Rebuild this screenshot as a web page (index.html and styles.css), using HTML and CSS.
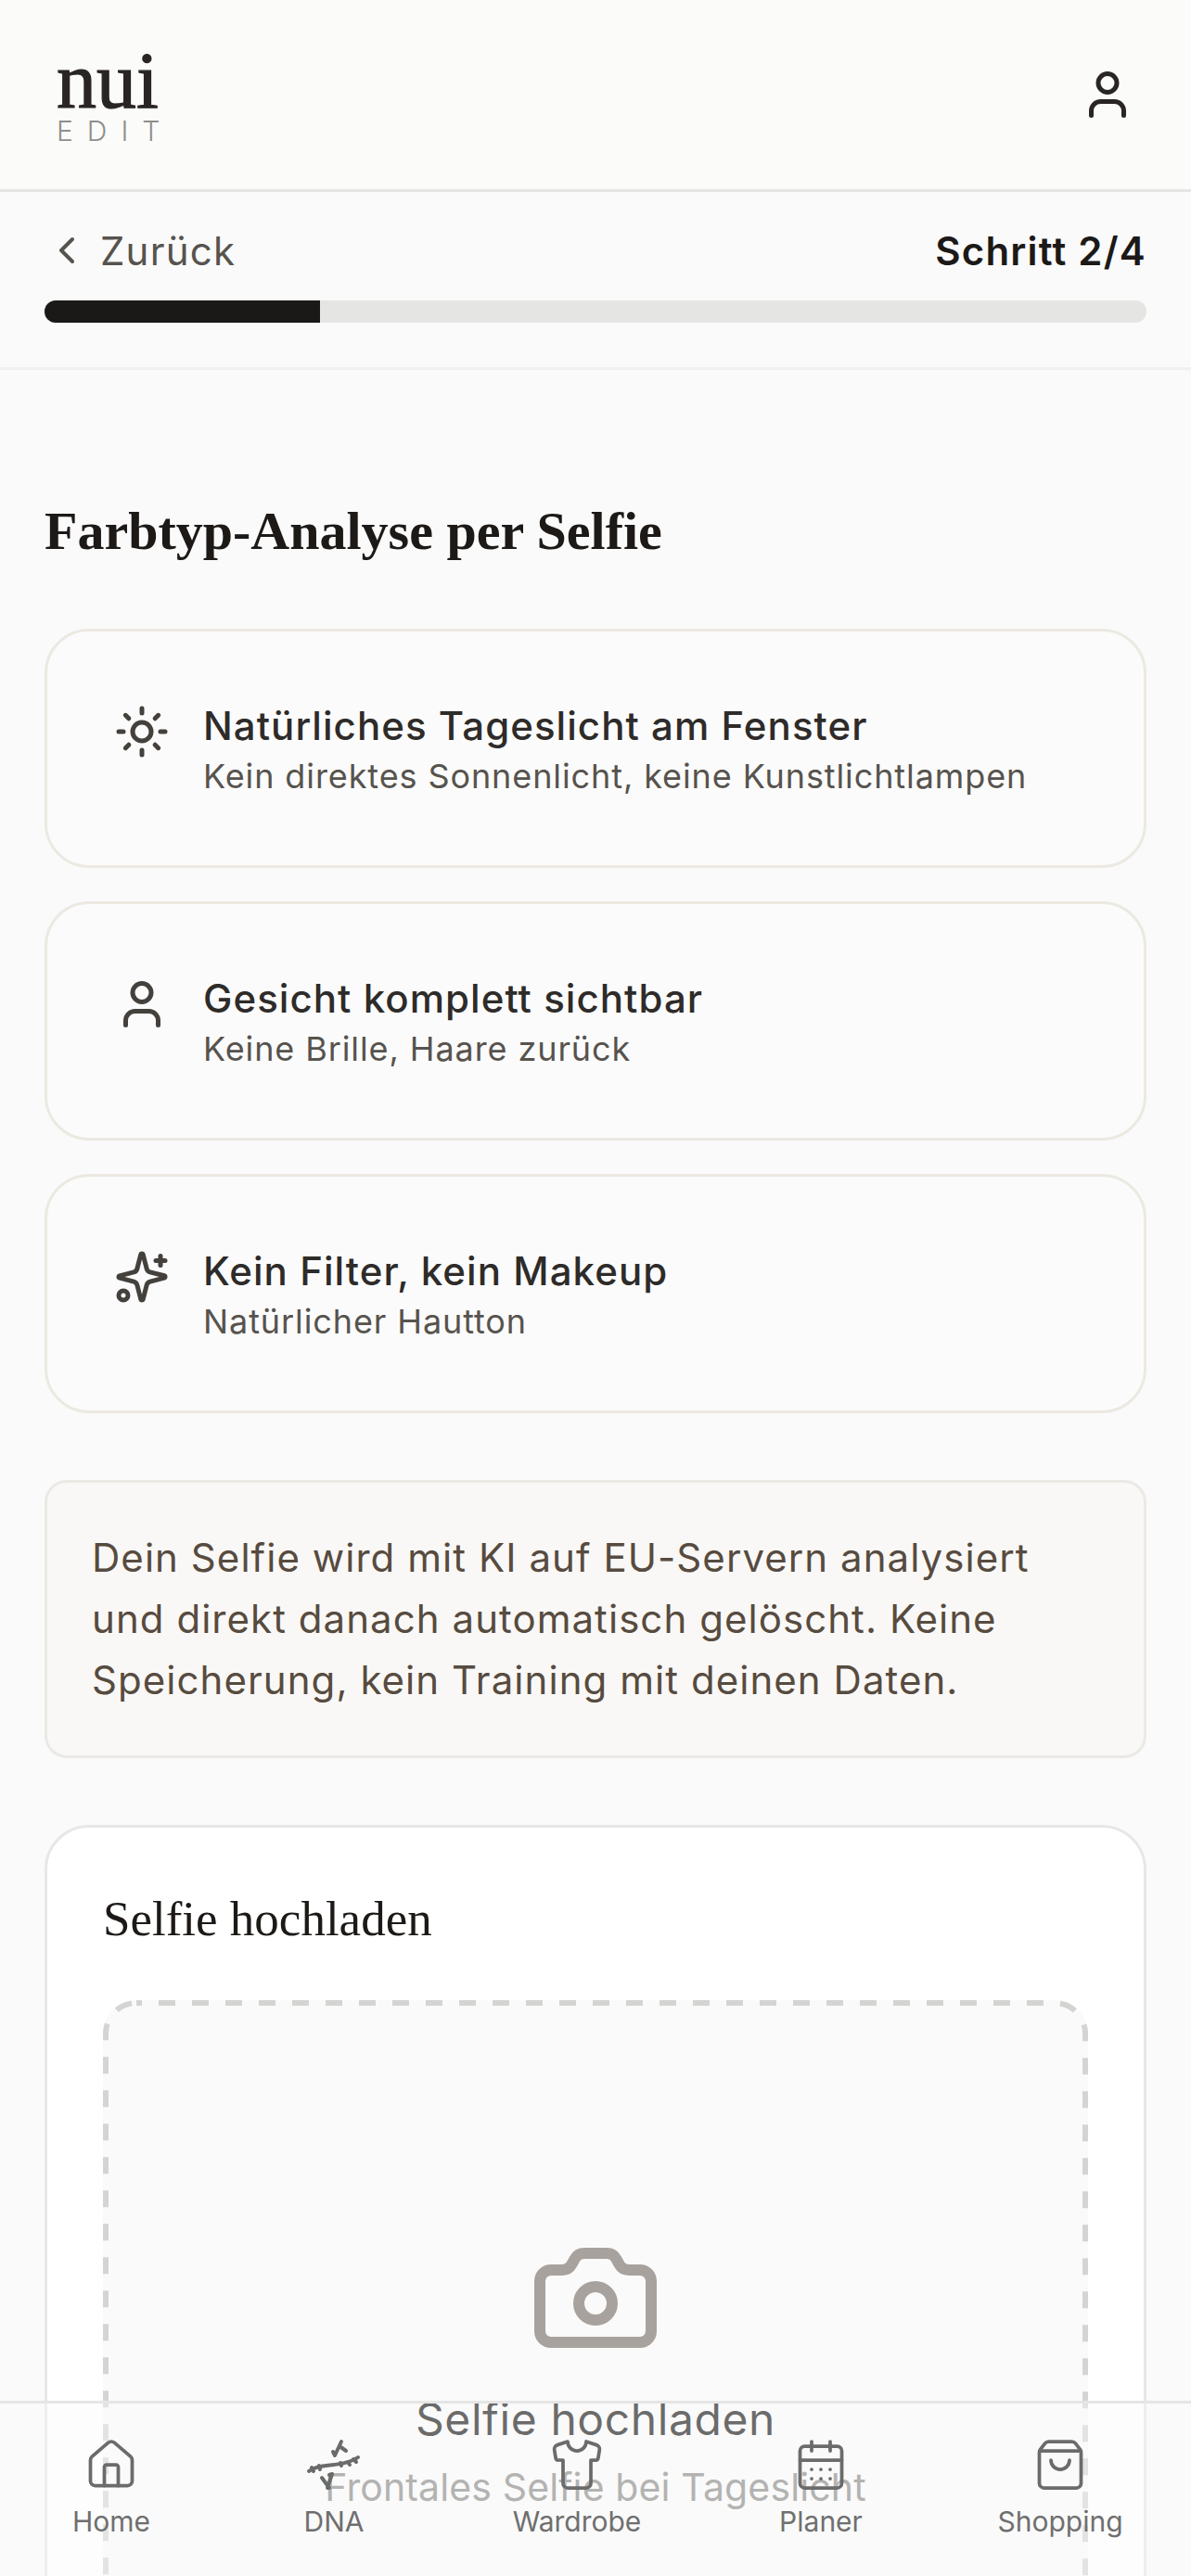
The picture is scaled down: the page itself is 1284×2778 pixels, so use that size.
FILE: index.html
```html
<!DOCTYPE html>
<html lang="de">
<head>
<meta charset="utf-8">
<title>nui EDIT – Farbtyp-Analyse</title>
<link rel="stylesheet" href="styles.css">
</head>
<body>
<div class="page">
  <header class="topbar">
    <div class="logo">
      <span class="logo-name">nui</span>
      <span class="logo-sub">EDIT</span>
    </div>
    <svg class="icon icon-dark" viewBox="0 0 24 24"><path d="M19 21v-2a4 4 0 0 0-4-4H9a4 4 0 0 0-4 4v2"/><circle cx="12" cy="7" r="4"/></svg>
  </header>

  <section class="progress">
    <div class="progress-row">
      <div class="back">
        <svg class="chevron" viewBox="0 0 24 24"><path d="m15 18-6-6 6-6"/></svg>
        <span>Zurück</span>
      </div>
      <span class="step">Schritt 2/4</span>
    </div>
    <div class="bar"><div class="bar-fill"></div></div>
  </section>

  <main class="content">
    <h1 class="title">Farbtyp-Analyse per Selfie</h1>

    <div class="tips">
      <div class="tip">
        <svg class="icon tip-icon" viewBox="0 0 24 24"><circle cx="12" cy="12" r="4"/><path d="M12 2v2"/><path d="M12 20v2"/><path d="m4.93 4.93 1.41 1.41"/><path d="m17.66 17.66 1.41 1.41"/><path d="M2 12h2"/><path d="M20 12h2"/><path d="m6.34 17.66-1.41 1.41"/><path d="m19.07 4.93-1.41 1.41"/></svg>
        <div>
          <div class="tip-title">Natürliches Tageslicht am Fenster</div>
          <div class="tip-sub">Kein direktes Sonnenlicht, keine Kunstlichtlampen</div>
        </div>
      </div>
      <div class="tip">
        <svg class="icon tip-icon" viewBox="0 0 24 24"><path d="M19 21v-2a4 4 0 0 0-4-4H9a4 4 0 0 0-4 4v2"/><circle cx="12" cy="7" r="4"/></svg>
        <div>
          <div class="tip-title">Gesicht komplett sichtbar</div>
          <div class="tip-sub">Keine Brille, Haare zurück</div>
        </div>
      </div>
      <div class="tip">
        <svg class="icon tip-icon" viewBox="0 0 24 24"><path d="M9.937 15.5A2 2 0 0 0 8.5 14.063l-6.135-1.582a.5.5 0 0 1 0-.962L8.5 9.936A2 2 0 0 0 9.937 8.5l1.582-6.135a.5.5 0 0 1 .963 0L14.063 8.5A2 2 0 0 0 15.5 9.937l6.135 1.581a.5.5 0 0 1 0 .964L15.5 14.063a2 2 0 0 0-1.437 1.437l-1.582 6.135a.5.5 0 0 1-.963 0z"/><path d="M20 3v4"/><path d="M22 5h-4"/><circle cx="4" cy="20" r="2"/></svg>
        <div>
          <div class="tip-title">Kein Filter, kein Makeup</div>
          <div class="tip-sub">Natürlicher Hautton</div>
        </div>
      </div>
    </div>

    <p class="notice">Dein Selfie wird mit KI auf EU-Servern analysiert und direkt danach automatisch gelöscht. Keine Speicherung, kein Training mit deinen Daten.</p>

    <section class="upload">
      <h2 class="upload-title">Selfie hochladen</h2>
      <div class="dropzone">
        <svg class="dash-frame"><rect class="dash-rect"/></svg>
        <svg class="camera" viewBox="0 0 24 24"><path d="M13.997 4a2 2 0 0 1 1.76 1.05l.486.9A2 2 0 0 0 18.003 7H20a2 2 0 0 1 2 2v9a2 2 0 0 1-2 2H4a2 2 0 0 1-2-2V9a2 2 0 0 1 2-2h1.997a2 2 0 0 0 1.759-1.048l.489-.904A2 2 0 0 1 10.004 4z"/><circle cx="12" cy="13" r="3"/></svg>
        <div class="drop-title">Selfie hochladen</div>
        <div class="drop-sub">Frontales Selfie bei Tageslicht</div>
      </div>
    </section>
  </main>

  <nav class="nav">
    <div class="nav-item">
      <svg class="nav-icon" viewBox="0 0 24 24"><path d="M15 21v-8a1 1 0 0 0-1-1h-4a1 1 0 0 0-1 1v8"/><path d="M3 10a2 2 0 0 1 .709-1.528l7-5.999a2 2 0 0 1 2.582 0l7 5.999A2 2 0 0 1 21 10v9a2 2 0 0 1-2 2H5a2 2 0 0 1-2-2z"/></svg>
      <span>Home</span>
    </div>
    <div class="nav-item">
      <svg class="nav-icon" viewBox="0 0 60 60"><g class="dna"><path d="M3 37C10 31 22 31 30 30S48 28 56 22"/><path d="M6 33l2 4M14 31l1 4M37 28l1 3M45 27l2 3M51 24l3 3"/><path d="M38 5L31 20M36 10L43 15M29 16L31 20"/><path d="M17 44L25 55M28 40L23 55M25 41L28 40"/></g></svg>
      <span>DNA</span>
    </div>
    <div class="nav-item">
      <svg class="nav-icon" viewBox="0 0 24 24"><path d="M20.38 3.46 16 2a4 4 0 0 1-8 0L3.62 3.46a2 2 0 0 0-1.34 2.23l.58 3.47a1 1 0 0 0 .99.84H6v10c0 1.1.9 2 2 2h8a2 2 0 0 0 2-2V10h2.15a1 1 0 0 0 .99-.84l.58-3.47a2 2 0 0 0-1.34-2.23z"/></svg>
      <span>Wardrobe</span>
    </div>
    <div class="nav-item">
      <svg class="nav-icon" viewBox="0 0 24 24"><path d="M8 2v4"/><path d="M16 2v4"/><rect x="3" y="4" width="18" height="18" rx="2"/><path d="M3 10h18"/><path d="M8 14h.01"/><path d="M12 14h.01"/><path d="M16 14h.01"/><path d="M8 18h.01"/><path d="M12 18h.01"/><path d="M16 18h.01"/></svg>
      <span>Planer</span>
    </div>
    <div class="nav-item">
      <svg class="nav-icon" viewBox="0 0 24 24"><path d="M16 10a4 4 0 0 1-8 0"/><path d="M3.103 6.034h17.794"/><path d="M3.4 5.467a2 2 0 0 0-.4 1.2V20a2 2 0 0 0 2 2h14a2 2 0 0 0 2-2V6.667a2 2 0 0 0-.4-1.2l-2-2.667A2 2 0 0 0 17 2H7a2 2 0 0 0-1.6.8z"/></svg>
      <span>Shopping</span>
    </div>
  </nav>
</div>
</body>
</html>
```

FILE: styles.css
```css
* { box-sizing: border-box; }
html, body { margin: 0; padding: 0; }
body { background: #fafafa; font-family: "Inter", "Liberation Sans", sans-serif; color: #1c1917; }

.page { position: relative; width: 1284px; height: 2778px; overflow: hidden; background: #fafafa; }

.icon, .chevron, .camera, .nav-icon { display: block; flex: none; fill: none; stroke-linecap: round; stroke-linejoin: round; }
.icon { width: 60px; height: 60px; stroke: #44403c; stroke-width: 2; }
.icon-dark { stroke: #292524; }

.topbar { height: 207px; padding: 0 60px; display: flex; align-items: center; justify-content: space-between; background: #fbfbf9; border-bottom: 3px solid #e5e5e5; }
.logo { display: flex; flex-direction: column; align-items: flex-start; padding: 6px 0 0 1px; }
.logo-name { font-family: "Liberation Serif", serif; font-weight: 400; font-size: 86px; line-height: 72px; color: #292524; -webkit-text-stroke: 1.2px #292524; }
.logo-sub { font-size: 30px; line-height: 36px; letter-spacing: 15px; color: #8e8e8c; font-weight: 300; }

.progress { height: 192px; padding: 36px 48px 0; border-bottom: 3px solid #f0f0ee; }
.progress-row { height: 54px; margin-bottom: 27px; display: flex; align-items: center; justify-content: space-between; }
.back { display: flex; align-items: center; gap: 12px; font-size: 42px; color: #57534e; letter-spacing: 1.2px; }
.chevron { width: 48px; height: 48px; stroke: #57534e; stroke-width: 2; }
.step { font-size: 42px; font-weight: 600; color: #1c1917; letter-spacing: 1.2px; }
.bar { height: 24px; border-radius: 12px; background: #e5e5e3; overflow: hidden; }
.bar-fill { width: 25%; height: 100%; background: #1a1917; }

.content { padding: 132px 48px 0; }
.title { margin: 0 0 63px; font-family: "Liberation Serif", serif; font-weight: 700; font-size: 58px; line-height: 84px; color: #1c1917; }

.tips { display: flex; flex-direction: column; gap: 36px; }
.tip { height: 258px; padding: 72px; display: flex; align-items: flex-start; gap: 36px; border: 3px solid #ebe9e1; border-radius: 48px; background: #fbfbfb; }
.tip-icon { margin-top: 6px; }
.tip-title { font-size: 42px; line-height: 60px; font-weight: 500; color: #2e2b29; letter-spacing: 1.05px; }
.tip-sub { font-size: 36px; line-height: 48px; color: #57534e; letter-spacing: 0.9px; }

.notice { margin: 72px 0; padding: 48px; border: 3px solid #ebe9e5; border-radius: 24px; background: #faf8f6; font-size: 42px; line-height: 66px; color: #574b40; letter-spacing: 1.05px; }

.upload { padding: 60px; border: 3px solid #e7e7e7; border-radius: 48px; background: #fff; }
.upload-title { margin: 0 0 50px; font-family: "Liberation Serif", serif; font-weight: 400; font-size: 53px; line-height: 76px; color: #1c1917; }
.dropzone { position: relative; height: 1000px; padding: 249px 6px 0; display: flex; flex-direction: column; align-items: center; border-radius: 36px; background: #fafafa; }
.dash-frame { position: absolute; left: 0; top: 0; width: 100%; height: 100%; }
.dash-rect { x: 3px; y: 3px; width: calc(100% - 6px); height: calc(100% - 6px); rx: 33px; fill: none; stroke: #d4d4d2; stroke-width: 6px; stroke-dasharray: 18px 18px; stroke-dashoffset: 12px; }
.camera { position: relative; width: 144px; height: 144px; stroke: #a8a29e; stroke-width: 2; }
.drop-title { position: relative; margin-top: 23px; font-size: 48px; line-height: 72px; color: #0c0c0c; letter-spacing: 0.6px; }
.drop-sub { position: relative; margin-top: 7px; font-size: 41px; line-height: 60px; color: #848482; letter-spacing: 0.13px; }

.nav { position: absolute; left: 0; right: 0; bottom: 0; height: 189px; padding: 36px 4px 0 0; display: grid; grid-template-columns: 240px 240px 284px 242px 274px; border-top: 3px solid #e5e5e5; background: rgba(251, 251, 249, 0.4); }
.nav-item { display: flex; flex-direction: column; align-items: center; gap: 13px; font-size: 30px; line-height: 36px; color: #6f6f6f; }
.nav-icon { width: 60px; height: 60px; stroke: #6b6b6b; stroke-width: 1.5; }
.dna { stroke-width: 4; }
```
